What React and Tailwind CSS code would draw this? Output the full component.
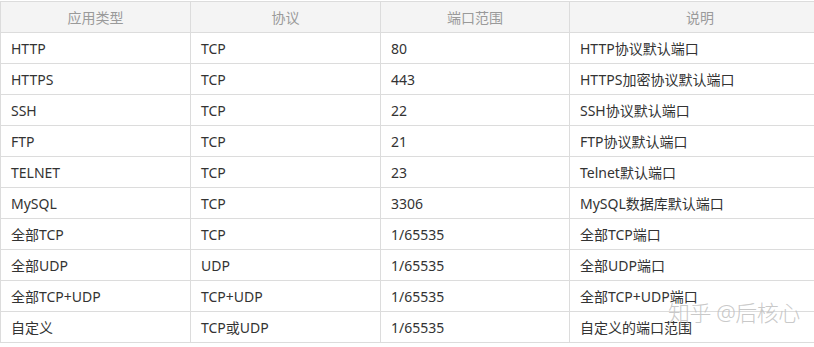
import React from "react";

const rows = [
  ["HTTP", "TCP", "80", "HTTP协议默认端口"],
  ["HTTPS", "TCP", "443", "HTTPS加密协议默认端口"],
  ["SSH", "TCP", "22", "SSH协议默认端口"],
  ["FTP", "TCP", "21", "FTP协议默认端口"],
  ["TELNET", "TCP", "23", "Telnet默认端口"],
  ["MySQL", "TCP", "3306", "MySQL数据库默认端口"],
  ["全部TCP", "TCP", "1/65535", "全部TCP端口"],
  ["全部UDP", "UDP", "1/65535", "全部UDP端口"],
  ["全部TCP+UDP", "TCP+UDP", "1/65535", "全部TCP+UDP端口"],
  ["自定义", "TCP或UDP", "1/65535", "自定义的端口范围"],
];

const headers = ["应用类型", "协议", "端口范围", "说明"];

export default function App() {
  return (
    <div
      className="relative w-[814px] h-[347px] bg-white overflow-hidden pt-[1px]"
      style={{ fontFamily: '"Noto Sans", "Noto Sans CJK SC", sans-serif' }}
    >
      <div className="w-[830px] border-l border-t border-[#dcdcdc]">
        <div className="grid grid-cols-[190px_190px_189px_261px] h-[31px] bg-[#f4f4f4] text-[#9a9a9a] text-[14px]">
          {headers.map((h, i) => (
            <div key={i} className="flex items-center justify-center border-r border-b border-[#dcdcdc]">
              {h}
            </div>
          ))}
        </div>
        {rows.map((r, ri) => (
          <div key={ri} className="grid grid-cols-[190px_190px_189px_261px] h-[31px] text-[#333] text-[14px]">
            {r.map((c, ci) => (
              <div key={ci} className="flex items-center pl-[10px] whitespace-nowrap border-r border-b border-[#dcdcdc]">
                {c}
              </div>
            ))}
          </div>
        ))}
      </div>
      <div className="absolute left-[668px] top-[301px] whitespace-nowrap text-[22px] tracking-[-0.5px] text-[#c0c0c0]/85 leading-none font-light">
        知乎 @后核心
      </div>
    </div>
  );
}
